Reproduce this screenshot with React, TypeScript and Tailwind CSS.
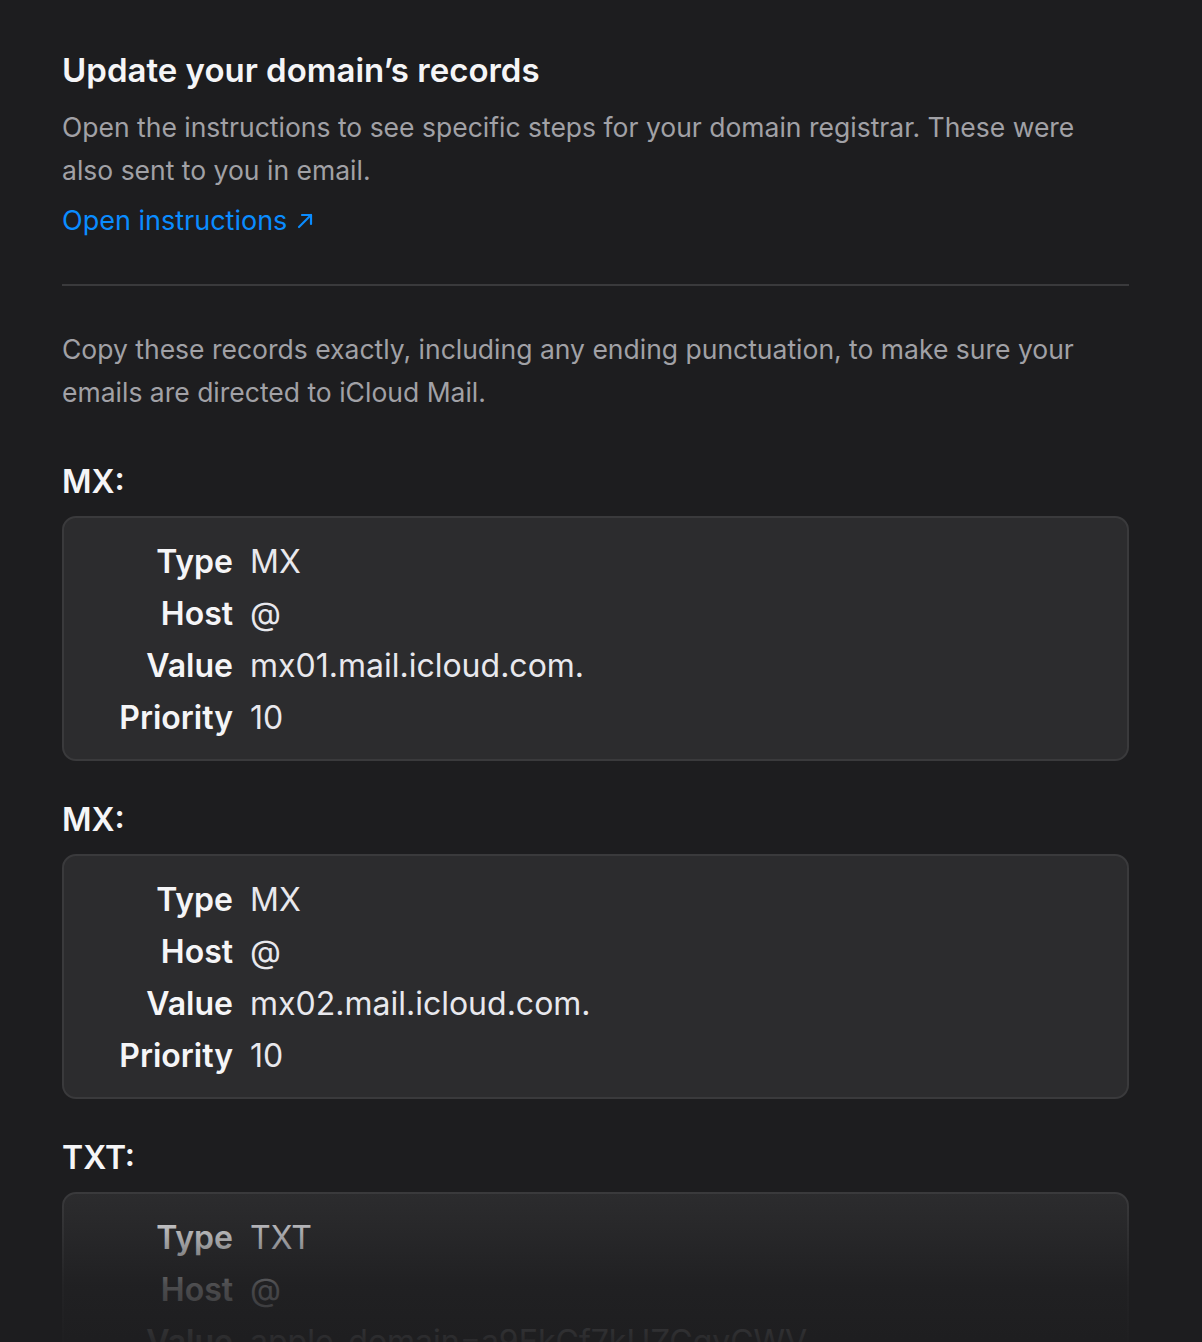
import React from 'react';

type Row = { label: string; value: string };

const records: { kind: string; rows: Row[] }[] = [
  {
    kind: 'MX:',
    rows: [
      { label: 'Type', value: 'MX' },
      { label: 'Host', value: '@' },
      { label: 'Value', value: 'mx01.mail.icloud.com.' },
      { label: 'Priority', value: '10' },
    ],
  },
  {
    kind: 'MX:',
    rows: [
      { label: 'Type', value: 'MX' },
      { label: 'Host', value: '@' },
      { label: 'Value', value: 'mx02.mail.icloud.com.' },
      { label: 'Priority', value: '10' },
    ],
  },
  {
    kind: 'TXT:',
    rows: [
      { label: 'Type', value: 'TXT' },
      { label: 'Host', value: '@' },
      { label: 'Value', value: 'apple-domain=a9EkCf7kUZCqvCWV' },
    ],
  },
];

const RecordCard: React.FC<{ kind: string; rows: Row[] }> = ({ kind, rows }) => (
  <section className="mb-[41px]">
    <h3 className="text-[32px] leading-[36px] font-semibold text-[#f5f5f7] mb-[16px]">{kind}</h3>
    <div className="rounded-[14px] border-2 border-[#3a3a3c] bg-[#2c2c2e] pt-[18px] pb-[15px]">
      <div className="grid grid-cols-[169px_1fr] gap-x-[17px]">
        {rows.map((r) => (
          <React.Fragment key={r.label}>
            <div className="text-right text-[32px] leading-[52px] font-semibold text-[#f5f5f7]">{r.label}</div>
            <div className="text-[32px] leading-[52px] text-[#e8e8ed]">{r.value}</div>
          </React.Fragment>
        ))}
      </div>
    </div>
  </section>
);

export default function App() {
  return (
    <div
      className="relative h-[1342px] w-full overflow-hidden bg-[#1d1d1f] text-white"
      style={{ fontFamily: 'Inter, "Noto Sans", "Liberation Sans", sans-serif' }}
    >
      <div className="pl-[62px] pr-[73px] pt-[48px]">
        <h1 className="text-[33px] leading-[44px] font-semibold text-[#f5f5f7]">
          Update your domain’s records
        </h1>
        <p className="mt-[14px] text-[26.5px] leading-[43px] text-[#a1a1a6]">
          Open the instructions to see specific steps for your domain registrar. These were also sent to you in email.
        </p>
        <a href="#" className="mt-[7px] inline-flex items-center gap-[9px] text-[27px] leading-[43px] text-[#0a8cff]">
          Open instructions
          <svg width="18" height="18" viewBox="0 0 18 18" fill="none" stroke="currentColor" strokeWidth="2.2" strokeLinecap="round" strokeLinejoin="round">
            <path d="M3 15 L15 3" />
            <path d="M6 3 H15 V12" />
          </svg>
        </a>
        <div className="mt-[42px] h-[2px] bg-[#3a3a3c]" />
        <p className="mt-[42px] text-[26.5px] leading-[43px] text-[#a1a1a6]">
          Copy these records exactly, including any ending punctuation, to make sure your emails are directed to iCloud Mail.
        </p>
        <div className="mt-[50px]">
          {records.map((r, i) => (
            <RecordCard key={i} kind={r.kind} rows={r.rows} />
          ))}
        </div>
      </div>
      <div className="pointer-events-none absolute inset-x-0 bottom-0 h-[150px] bg-[linear-gradient(to_bottom,rgba(29,29,31,0)_0%,rgba(29,29,31,0.35)_30%,rgba(29,29,31,0.78)_62%,rgba(29,29,31,0.94)_100%)]" />
    </div>
  );
}
